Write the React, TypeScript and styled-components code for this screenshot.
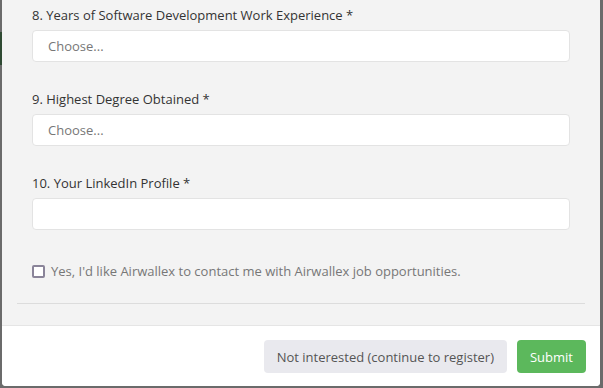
import React from 'react'
import styled, { createGlobalStyle } from 'styled-components'

const GlobalStyle = createGlobalStyle`
  html, body {
    margin: 0;
    padding: 0;
    background: #6b6b6b;
  }
  body {
    font-family: 'Open Sans', 'Noto Sans', sans-serif;
    font-size: 13px;
    color: #333;
  }
`

const Backdrop = styled.div`
  display: flex;
  width: 603px;
  height: 388px;
  box-sizing: border-box;
  padding: 0 3px 2px 2px;
  background:
    linear-gradient(to bottom, transparent 32px, #2f4a33 32px, #2f4a33 65px, transparent 65px) left top / 2px 100% no-repeat,
    #6b6b6b;
`

const Modal = styled.div`
  flex: 1;
  display: flex;
  flex-direction: column;
  background: #fff;
  border-radius: 0 0 4px 4px;
  overflow: hidden;
`

const Body = styled.div`
  flex: 1;
  background: #f3f3f3;
  padding: 5px 15px 20px;
`

const Form = styled.form`
  padding: 0 15px 22px;
  border-bottom: 1px solid #dcdcdc;
`

const Group = styled.div`
  margin-bottom: 27px;
`

const Label = styled.label`
  display: block;
  line-height: 20px;
  margin-bottom: 5px;
  color: #333;
`

const Input = styled.input`
  display: block;
  width: 100%;
  height: 32px;
  box-sizing: border-box;
  padding: 0 15px;
  border: 1px solid #e3e3e3;
  border-radius: 4px;
  background: #fff;
  font: inherit;
  color: #333;
  outline: none;
  &::placeholder {
    color: #777;
  }
`

const CheckRow = styled.label`
  display: flex;
  align-items: center;
  gap: 6px;
  margin-top: 31px;
  line-height: 20px;
  color: #777;
`

const Box = styled.span`
  width: 13px;
  height: 13px;
  box-sizing: border-box;
  border: 2px solid #8a8499;
  border-radius: 2px;
  background: #fff;
`

const Footer = styled.div`
  display: flex;
  justify-content: flex-end;
  gap: 10px;
  padding: 14px 14px 13px;
  border-top: 1px solid #e5e5e5;
  background: #fff;
`

const Button = styled.button<{ primary?: boolean }>`
  height: 33px;
  padding: 0 13px;
  border: none;
  border-radius: 4px;
  font: inherit;
  cursor: pointer;
  background: ${({ primary }) => (primary ? '#5cb85c' : '#e9e9ee')};
  color: ${({ primary }) => (primary ? '#fff' : '#555')};
`

const fields = [
  { label: '8. Years of Software Development Work Experience *', placeholder: 'Choose...' },
  { label: '9. Highest Degree Obtained *', placeholder: 'Choose...' },
  { label: '10. Your LinkedIn Profile *', placeholder: '' },
]

export default function App() {
  return (
    <>
      <GlobalStyle />
      <Backdrop>
        <Modal>
          <Body>
            <Form>
              {fields.map((f) => (
                <Group key={f.label}>
                  <Label>{f.label}</Label>
                  <Input placeholder={f.placeholder} readOnly={!!f.placeholder} />
                </Group>
              ))}
              <CheckRow>
                <Box />
                Yes, I'd like Airwallex to contact me with Airwallex job opportunities.
              </CheckRow>
            </Form>
          </Body>
          <Footer>
            <Button type='button'>Not interested (continue to register)</Button>
            <Button type='button' primary>
              Submit
            </Button>
          </Footer>
        </Modal>
      </Backdrop>
    </>
  )
}
